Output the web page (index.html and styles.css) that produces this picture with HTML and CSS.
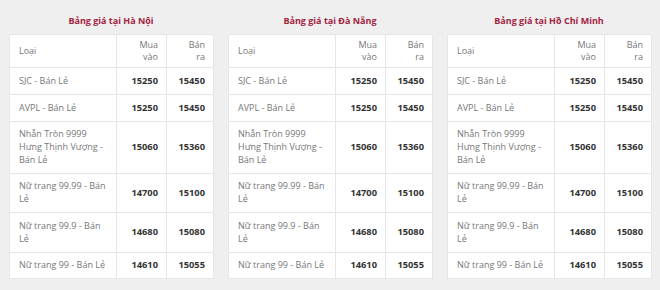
FILE: index.html
```html
<!DOCTYPE html>
<html lang="vi">
<head>
<meta charset="utf-8">
<link rel="stylesheet" href="styles.css">
</head>
<body>
<div class="wrap">
  <section class="block">
    <h3 class="title">Bảng giá tại Hà Nội</h3>
    <table class="prices">
      <colgroup><col class="c1"><col class="c2"><col class="c3"></colgroup>
      <thead><tr><th class="name">Loại</th><th>Mua<br>vào</th><th>Bán<br>ra</th></tr></thead>
      <tbody>
        <tr><td class="name">SJC - Bán Lẻ</td><td>15250</td><td>15450</td></tr>
        <tr><td class="name">AVPL - Bán Lẻ</td><td>15250</td><td>15450</td></tr>
        <tr><td class="name">Nhẫn Tròn 9999 Hưng Thịnh Vượng - Bán Lẻ</td><td>15060</td><td>15360</td></tr>
        <tr><td class="name">Nữ trang 99.99 - Bán Lẻ</td><td>14700</td><td>15100</td></tr>
        <tr><td class="name">Nữ trang 99.9 - Bán Lẻ</td><td>14680</td><td>15080</td></tr>
        <tr><td class="name">Nữ trang 99 - Bán Lẻ</td><td>14610</td><td>15055</td></tr>
      </tbody>
    </table>
  </section>
  <section class="block">
    <h3 class="title">Bảng giá tại Đà Nẵng</h3>
    <table class="prices">
      <colgroup><col class="c1"><col class="c2"><col class="c3"></colgroup>
      <thead><tr><th class="name">Loại</th><th>Mua<br>vào</th><th>Bán<br>ra</th></tr></thead>
      <tbody>
        <tr><td class="name">SJC - Bán Lẻ</td><td>15250</td><td>15450</td></tr>
        <tr><td class="name">AVPL - Bán Lẻ</td><td>15250</td><td>15450</td></tr>
        <tr><td class="name">Nhẫn Tròn 9999 Hưng Thịnh Vượng - Bán Lẻ</td><td>15060</td><td>15360</td></tr>
        <tr><td class="name">Nữ trang 99.99 - Bán Lẻ</td><td>14700</td><td>15100</td></tr>
        <tr><td class="name">Nữ trang 99.9 - Bán Lẻ</td><td>14680</td><td>15080</td></tr>
        <tr><td class="name">Nữ trang 99 - Bán Lẻ</td><td>14610</td><td>15055</td></tr>
      </tbody>
    </table>
  </section>
  <section class="block">
    <h3 class="title">Bảng giá tại Hồ Chí Minh</h3>
    <table class="prices">
      <colgroup><col class="c1"><col class="c2"><col class="c3"></colgroup>
      <thead><tr><th class="name">Loại</th><th>Mua<br>vào</th><th>Bán<br>ra</th></tr></thead>
      <tbody>
        <tr><td class="name">SJC - Bán Lẻ</td><td>15250</td><td>15450</td></tr>
        <tr><td class="name">AVPL - Bán Lẻ</td><td>15250</td><td>15450</td></tr>
        <tr><td class="name">Nhẫn Tròn 9999 Hưng Thịnh Vượng - Bán Lẻ</td><td>15060</td><td>15360</td></tr>
        <tr><td class="name">Nữ trang 99.99 - Bán Lẻ</td><td>14700</td><td>15100</td></tr>
        <tr><td class="name">Nữ trang 99.9 - Bán Lẻ</td><td>14680</td><td>15080</td></tr>
        <tr><td class="name">Nữ trang 99 - Bán Lẻ</td><td>14610</td><td>15055</td></tr>
      </tbody>
    </table>
  </section>
</div>
</body>
</html>
```
FILE: styles.css
```css
html, body {
  margin: 0;
  padding: 0;
  background: #efefef;
  font-family: "Open Sans", "Noto Sans", sans-serif;
  font-size: 9px;
  line-height: 12.7px;
  color: #777;
}
.wrap {
  display: grid;
  grid-template-columns: repeat(3, 204px);
  column-gap: 15px;
  padding: 14px 9px 0;
}
.block {
  display: flex;
  flex-direction: column;
}
.title {
  margin: 0 0 7px;
  text-align: center;
  font-size: 9px;
  line-height: 13px;
  font-weight: 700;
  color: #a3243f;
}
.prices {
  width: 204px;
  border-collapse: collapse;
  table-layout: fixed;
  background: #fff;
  border: 1px solid #e6e6e6;
}
.c1 { width: 107px; }
.c2 { width: 50px; }
.c3 { width: 47px; }
.prices th,
.prices td {
  border: 1px solid #e6e6e6;
  padding: 6.5px 8px;
  text-align: right;
  vertical-align: middle;
}
.prices th {
  font-weight: 400;
  color: #777;
  padding-top: 3.5px;
  padding-bottom: 3.5px;
}
.prices td {
  font-weight: 700;
  color: #333;
  font-size: 9.3px;
}
.prices .name {
  text-align: left;
  font-weight: 400;
  font-size: 9px;
  color: #777;
  padding-left: 9px;
}
```
